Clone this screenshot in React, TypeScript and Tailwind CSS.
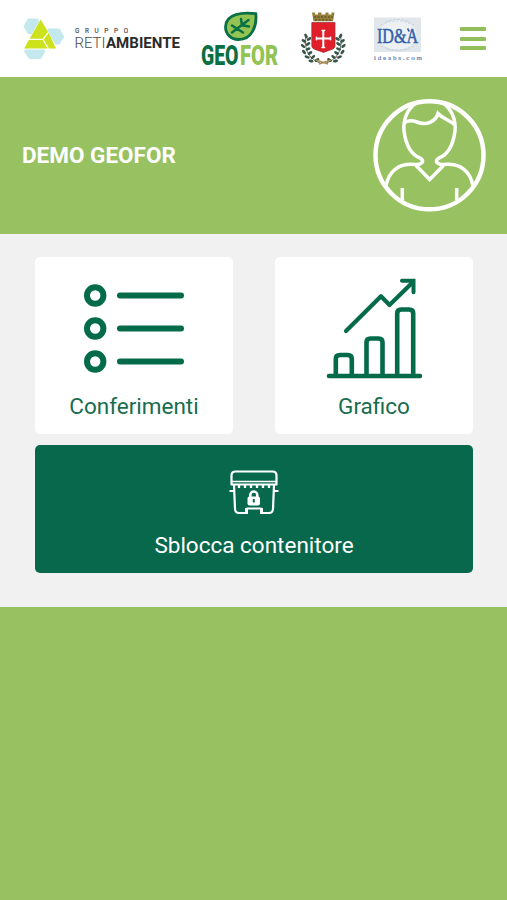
import React from "react";

const sans = "font-['Roboto','Liberation_Sans',sans-serif]";

function RetiAmbienteLogo() {
  return (
    <svg className="h-[76px] w-[190px] shrink-0" viewBox="0 0 190 76" role="img">
      <g fill="#c3e9ef">
        <path d="M28 18.500h9.500l5 7.800-5 7.700H28l-4.500-7.700z" />
        <path d="M48 28.500h11.500l4.800 8-4.800 8H48l-4.500-8z" />
        <path d="M28 44h12.500l5 7.500-4.700 7.500H29l-5-7.500z" />
      </g>
      <path d="M41 18.500L58 49.500H22.500z" fill="#fff" />
      <g fill="#cbe21c">
        <path d="M40.700 19.500L48 31.700L42.700 38.800H29.600z" />
        <path d="M48.700 32.700L56 48.500H49L43.700 39.400z" />
        <path d="M28.800 40H42.700L47.500 48.500H24.200z" />
      </g>
      <text x="75" y="33" textLength="53" fontSize="6.300" fill="#444" stroke="#444" strokeWidth=".15" className={sans}>GRUPPO</text>
      <text x="74.500" y="48" textLength="31" lengthAdjust="spacingAndGlyphs" fontSize="15" fontWeight="300" fill="#494949" className={sans}>RETI</text>
      <text x="106" y="48" textLength="74" lengthAdjust="spacingAndGlyphs" fontSize="15" fontWeight="700" fill="#2b2b2b" className={sans}>AMBIENTE</text>
    </svg>
  );
}

function GeoforLogo() {
  return (
    <svg className="h-[76px] w-[100px] shrink-0" viewBox="190 0 100 76" role="img">
      <path d="M255.800 13.700C243 12 225.500 13.500 225.500 27C225.500 34 231 39.500 238.500 39.500C252.500 39.500 257 25 255.800 13.700Z" fill="#93c353" stroke="#087044" strokeWidth="2.800" />
      <g fill="none" stroke="#087044" strokeWidth="2.500" strokeLinecap="round">
        <path d="M232 32.500L248.500 20M237 28.800l-5-3.300M242 25l-1-6M237 28.800l6 3.700M242 25.200l7 1.300" />
      </g>
      <text x="201" y="65" textLength="37.500" lengthAdjust="spacingAndGlyphs" fontSize="27" fontWeight="900" fill="#087044" className={sans}>GEO</text>
      <text x="240" y="65" textLength="38" lengthAdjust="spacingAndGlyphs" fontSize="27" fontWeight="900" fill="#92c353" className={sans}>FOR</text>
    </svg>
  );
}

const leftLeaves = [
  [306, 36, 60], [309, 39, -30], [304, 41, 30], [308, 44, -30], [303, 46, 40], [308, 49, -20],
  [304, 52, 50], [310, 53, -30], [307, 57, 20], [313, 57, -40], [311, 61, 10], [317, 60, -30],
];

function LeafBranch() {
  return (
    <g>
      <path d="M306 35C304 47 307 58 320 63" fill="none" stroke="#4c6258" strokeWidth=".9" />
      {leftLeaves.map(([x, y, r]) => (
        <ellipse key={`${x}-${y}`} cx={x} cy={y} rx="2.600" ry="1.400" fill="#365447" transform={`rotate(${r} ${x} ${y})`} />
      ))}
      <g fill="#a4525a">
        <circle cx="305" cy="43" r=".8" />
        <circle cx="310" cy="57" r=".8" />
      </g>
    </g>
  );
}

function CityCrest() {
  return (
    <svg className="h-[76px] w-[70px] shrink-0" viewBox="290 0 70 76" role="img">
      <LeafBranch />
      <g transform="translate(646.500 0) scale(-1 1)"><LeafBranch /></g>
      <path d="M316 60l12 4M331 60l-12 4" stroke="#a58a52" strokeWidth="1.500" />
      <path d="M312 12.500h3v2h3v-2h3.500v2h4v-2h3v2h3v-2h3l-1.500 8.700h-19.500z" fill="#94803a" />
      <path d="M314 17h19M315 20h17" stroke="#51431f" strokeWidth="1" strokeDasharray="2 1.500" />
      <path d="M311.800 22.500H335V46c0 3.500-6 4-11.500 6.500C318 50 311.800 49.500 311.800 46z" fill="#e01f2b" stroke="#9e2830" strokeWidth=".7" />
      <path d="M323.300 30.500v17M316.500 38.500h14" stroke="#fff" strokeWidth="2" />
      <path d="M322 30.500h2.600M322 47.500h2.600M316.500 37.200v2.600M330.500 37.200v2.600" stroke="#fff" strokeWidth="1.500" strokeLinecap="round" />
    </svg>
  );
}

function IdeaLogo() {
  return (
    <svg className="h-[76px] w-[80px] shrink-0" viewBox="360 0 80 76" role="img">
      <rect x="374" y="17.500" width="47" height="34.500" fill="#e1e6eb" />
      <ellipse cx="397.500" cy="35" rx="19" ry="15" fill="#edf1f4" />
      <g fill="none" stroke="#b8c8dc" strokeWidth=".8" strokeDasharray="2 2">
        <path d="M381 25q16-8 33 0M386 22q12-5 23 0M381 46q16 8 33 0M387 49q10 3 21 0" />
      </g>
      <text x="377" y="43" textLength="41" lengthAdjust="spacingAndGlyphs" fontSize="20" fill="#315fac" stroke="#315fac" strokeWidth=".5" className="font-['Liberation_Serif',serif]">ID&amp;A</text>
      <path d="M407.500 28.500l1.800 3" stroke="#315fac" strokeWidth="1.500" />
      <text x="374" y="59.500" textLength="48" fontSize="7" fill="#6681b5" stroke="#6681b5" strokeWidth=".2" className="font-['Liberation_Serif',serif]">ideabs.com</text>
    </svg>
  );
}

function AvatarIcon() {
  return (
    <svg className="mb-0.5 size-[114px]" viewBox="373 98 114 114" fill="none" stroke="#fff" strokeWidth="3.500">
      <circle cx="429.500" cy="155.300" r="54" strokeWidth="4.500" />
      <path d="M418 102C407 108 403 120 404 131C406 146 412 155 420 158Q424 160.500 422 162.500Q420 165 415 164.500C399 163 388.500 171 386 186" />
      <path d="M441 102C452 108 456 120 455 131C453 146 447 155 439 158Q435 160.500 437 162.500Q439 165 444 164.500C460 163 470.500 171 473 186" />
      <path d="M404 123C408 119.500 413 120.500 417 122C427 126 436 121 438 113.500C443 119 449 119.500 455 125M416 165.500L429.700 179.500L443.500 165.500M402.300 188v12M456.700 188v12" />
    </svg>
  );
}

function ListIcon() {
  return (
    <svg className="h-[90px] w-[102px]" viewBox="83 284 102 90" fill="none" stroke="#046b4a">
      {[295.500, 328.500, 361.500].map((y) => (
        <g key={y}>
          <circle cx="95.200" cy={y} r="8.200" strokeWidth="6" />
          <path d={`M120 ${y}H181`} strokeWidth="6" strokeLinecap="round" />
        </g>
      ))}
    </svg>
  );
}

function ChartIcon() {
  return (
    <svg className="h-[102px] w-[96px]" viewBox="326 278 96 102" fill="none" stroke="#046b4a" strokeWidth="4.600" strokeLinecap="round" strokeLinejoin="round">
      <path d="M329 376H420M335.800 375v-16q0-4 4-4h8q4 0 4 4v16M366.500 375v-32.500q0-4 4-4h8q4 0 4 4V375M397.200 375v-61.500q0-4 4-4h8q4 0 4 4V375" />
      <path d="M346 331L381 296.300L389.500 305L412 283" strokeWidth="4.200" />
      <path d="M402 280.800h11.500v11.500" strokeWidth="4" strokeLinejoin="miter" />
    </svg>
  );
}

function ContainerIcon() {
  return (
    <svg className="h-[46px] w-[50px]" viewBox="229 470 50 46" fill="none" stroke="#fff" strokeWidth="2.200" strokeLinejoin="round">
      <path d="M231.500 484.500v-9q0-4 4-4h37q4 0 4 4v9z" />
      <path d="M232 481.500h44" strokeWidth="1.500" />
      <path d="M234 485l1 24q.3 4 4 4h7.500M261.500 513h7.500q3.700 0 4-4L274 485M229.500 491h4.500M274 491h4.500M246.500 508.500h15" />
      <path d="M239 485v3M245 485v3M251 485v3M257 485v3M263 485v3M269 485v3" strokeWidth="2.300" />
      <path d="M246.500 508v6M261.500 508v6" strokeWidth="3" />
      <rect x="247.500" y="496.500" width="12.500" height="9" rx="2" fill="#fff" stroke="none" />
      <path d="M250.300 497v-2a3.500 3.500 0 0 1 7 0v2" strokeWidth="2.500" />
      <path d="M253.800 499v3.500" stroke="#08664b" strokeWidth="2" />
    </svg>
  );
}

export default function App() {
  return (
    <div className={`flex min-h-screen w-full flex-col bg-[#98c162] ${sans}`}>
      <header className="flex h-[77px] shrink-0 bg-white">
        <RetiAmbienteLogo />
        <GeoforLogo />
        <CityCrest />
        <IdeaLogo />
        <button aria-label="Menu" className="ml-5 mt-[27px] flex h-[23px] w-[26px] flex-col justify-between">
          <span className="h-1 w-full rounded-[1px] bg-[#92be5b]" />
          <span className="h-1 w-full rounded-[1px] bg-[#92be5b]" />
          <span className="h-1 w-full rounded-[1px] bg-[#92be5b]" />
        </button>
      </header>

      <section className="flex h-[157px] shrink-0 items-center justify-between pl-[22px] pr-5">
        <h1 className="text-[22.500px] font-bold text-white">DEMO GEOFOR</h1>
        <AvatarIcon />
      </section>

      <main className="flex h-[373px] shrink-0 flex-col gap-[11px] bg-[#f1f1f1] pl-[35px] pr-[34px] pt-[23px]">
        <div className="flex justify-between">
          <button className="flex h-[177px] w-[198px] flex-col items-center rounded-[5px] bg-white pt-[27px] text-[#176d4e]">
            <ListIcon />
            <span className="mt-[18px] text-[22.500px] leading-7">Conferimenti</span>
          </button>
          <button className="flex h-[177px] w-[198px] flex-col items-center rounded-[5px] bg-white pt-[21px] text-[#176d4e]">
            <ChartIcon />
            <span className="mt-[12px] text-[22.500px] leading-7">Grafico</span>
          </button>
        </div>
        <button className="flex h-[128px] flex-col items-center rounded-[5px] bg-[#08684c] pt-[25px] text-white">
          <ContainerIcon />
          <span className="mt-[15px] text-[22.500px] leading-7">Sblocca contenitore</span>
        </button>
      </main>
    </div>
  );
}
